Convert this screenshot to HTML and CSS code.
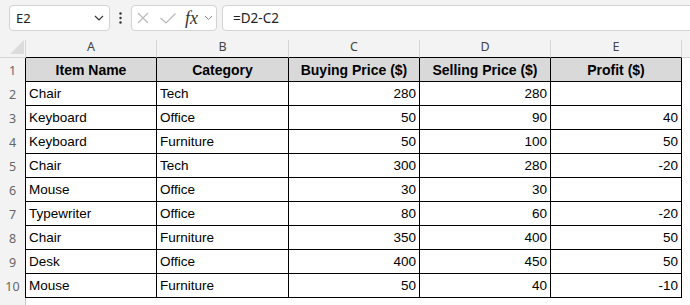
FILE: index.html
```html
<!DOCTYPE html>
<html lang="en">
<head>
    <meta charset="UTF-8">
    <meta name="viewport" content="width=device-width, initial-scale=1.0">
    <title>Profit Sheet</title>
    <link rel="stylesheet" href="styles.css">
</head>
<body>
    <div class="toolbar">
        <div class="name-box">
            <span>E2</span>
            <svg class="chevron" width="10" height="6" viewBox="0 0 10 6"><path d="M1 1 L5 5 L9 1" fill="none" stroke="#333" stroke-width="1.1"/></svg>
        </div>
        <div class="more">
            <svg width="3" height="12" viewBox="0 0 3 12"><circle cx="1.5" cy="1.5" r="1.2" fill="#333"/><circle cx="1.5" cy="6" r="1.2" fill="#333"/><circle cx="1.5" cy="10.5" r="1.2" fill="#333"/></svg>
        </div>
        <div class="fx-box">
            <svg class="cancel" width="12" height="12" viewBox="0 0 12 12"><path d="M1 1 L11 11 M11 1 L1 11" stroke="#b9b9b9" stroke-width="1.2"/></svg>
            <svg class="enter" width="16" height="11" viewBox="0 0 16 11"><path d="M0.5 5 L6 10 L15.5 0.5" fill="none" stroke="#b9b9b9" stroke-width="1.2"/></svg>
            <span class="fx">fx</span>
            <svg class="fx-chevron" width="9" height="6" viewBox="0 0 9 6"><path d="M1 1 L4.5 4.5 L8 1" fill="none" stroke="#888" stroke-width="1"/></svg>
        </div>
        <div class="formula">=D2-C2</div>
    </div>

    <div class="sheet">
        <div class="corner">
            <svg width="14" height="14" viewBox="0 0 14 14"><path d="M14 0 L14 14 L0 14 Z" fill="#dcdcdc"/></svg>
        </div>
        <div class="col-head">A</div>
        <div class="col-head">B</div>
        <div class="col-head">C</div>
        <div class="col-head">D</div>
        <div class="col-head">E</div>
        <div class="col-head last"></div>

        <div class="row-head">1</div>
        <div class="cell hdr">Item Name</div>
        <div class="cell hdr">Category</div>
        <div class="cell hdr">Buying Price ($)</div>
        <div class="cell hdr">Selling Price ($)</div>
        <div class="cell hdr">Profit ($)</div>
        <div class="blank"></div>

        <div class="row-head">2</div>
        <div class="cell">Chair</div>
        <div class="cell">Tech</div>
        <div class="cell num">280</div>
        <div class="cell num">280</div>
        <div class="cell num"></div>
        <div class="blank"></div>

        <div class="row-head">3</div>
        <div class="cell">Keyboard</div>
        <div class="cell">Office</div>
        <div class="cell num">50</div>
        <div class="cell num">90</div>
        <div class="cell num">40</div>
        <div class="blank"></div>

        <div class="row-head">4</div>
        <div class="cell">Keyboard</div>
        <div class="cell">Furniture</div>
        <div class="cell num">50</div>
        <div class="cell num">100</div>
        <div class="cell num">50</div>
        <div class="blank"></div>

        <div class="row-head">5</div>
        <div class="cell">Chair</div>
        <div class="cell">Tech</div>
        <div class="cell num">300</div>
        <div class="cell num">280</div>
        <div class="cell num">-20</div>
        <div class="blank"></div>

        <div class="row-head">6</div>
        <div class="cell">Mouse</div>
        <div class="cell">Office</div>
        <div class="cell num">30</div>
        <div class="cell num">30</div>
        <div class="cell num"></div>
        <div class="blank"></div>

        <div class="row-head">7</div>
        <div class="cell">Typewriter</div>
        <div class="cell">Office</div>
        <div class="cell num">80</div>
        <div class="cell num">60</div>
        <div class="cell num">-20</div>
        <div class="blank"></div>

        <div class="row-head">8</div>
        <div class="cell">Chair</div>
        <div class="cell">Furniture</div>
        <div class="cell num">350</div>
        <div class="cell num">400</div>
        <div class="cell num">50</div>
        <div class="blank"></div>

        <div class="row-head">9</div>
        <div class="cell">Desk</div>
        <div class="cell">Office</div>
        <div class="cell num">400</div>
        <div class="cell num">450</div>
        <div class="cell num">50</div>
        <div class="blank"></div>

        <div class="row-head">10</div>
        <div class="cell">Mouse</div>
        <div class="cell">Furniture</div>
        <div class="cell num">50</div>
        <div class="cell num">40</div>
        <div class="cell num">-10</div>
        <div class="blank"></div>

        <div class="row-head last"></div>
        <div class="blank"></div>
        <div class="blank"></div>
        <div class="blank"></div>
        <div class="blank"></div>
        <div class="blank"></div>
        <div class="blank"></div>
    </div>
</body>
</html>
```

FILE: styles.css
```css
/* Basic page */
body {
    margin: 0;
    font-family: "Liberation Sans", Arial, sans-serif;
    background-color: #fff;
    overflow: hidden;
}

* {
    box-sizing: border-box;
}

/* Formula toolbar */
.toolbar {
    display: flex;
    align-items: flex-start;
    height: 40px;
    padding: 5px 0 0 9px;
    background-color: #f3f3f3;
    font-family: "Noto Sans", sans-serif;
}

.name-box {
    width: 101px;
    height: 26px;
    border: 1px solid #d3d3d3;
    border-radius: 4px;
    background-color: #fff;
    display: flex;
    align-items: center;
    justify-content: space-between;
    padding: 0 5px 0 6px;
    font-size: 13px;
    color: #222;
}

.more {
    width: 21px;
    height: 26px;
    display: flex;
    align-items: center;
    justify-content: center;
}

.fx-box {
    width: 86px;
    height: 26px;
    border: 1px solid #d3d3d3;
    border-radius: 4px;
    background-color: #fff;
    display: flex;
    align-items: center;
    padding-left: 5px;
}

.fx-box .enter {
    margin-left: 11px;
}

.fx-box .fx {
    margin-left: 9px;
    width: 15px;
    font-family: "Liberation Serif", serif;
    font-style: italic;
    font-size: 18px;
    line-height: 20px;
    color: #333;
}

.fx-box .fx-chevron {
    margin-left: 4px;
}

.formula {
    flex: 1;
    height: 26px;
    margin-left: 5px;
    margin-right: -8px;
    border: 1px solid #d3d3d3;
    border-radius: 4px;
    background-color: #fff;
    padding-left: 10px;
    font-size: 13.5px;
    line-height: 24px;
    color: #222;
}

/* Sheet grid */
.sheet {
    display: grid;
    grid-template-columns: 26px 131px 132px 131px 131px 131px 1fr;
    grid-template-rows: 18px repeat(10, 24px) 1fr;
    height: 265px;
}

.corner {
    background-color: #f3f3f3;
    border-right: 1px solid #d5d5d5;
    border-bottom: 1px solid #d5d5d5;
    display: flex;
    align-items: flex-end;
    justify-content: flex-end;
    padding: 0 1px 3px 0;
}

.col-head {
    background-color: #f3f3f3;
    border-right: 1px solid #d5d5d5;
    border-bottom: 1px solid #000;
    text-align: center;
    font-family: "Noto Sans", sans-serif;
    font-size: 12.5px;
    line-height: 14px;
    color: #444;
}

.col-head.last {
    border-right: none;
    border-bottom-color: #d5d5d5;
}

.row-head {
    background-color: #f3f3f3;
    border-right: 1px solid #000;
    text-align: center;
    font-family: "Noto Sans", sans-serif;
    font-size: 12.5px;
    line-height: 26px;
    color: #666;
}

.row-head.last {
    border-right-color: #c8c8c8;
}

/* Table cells */
.cell {
    border-right: 1px solid #000;
    border-bottom: 1px solid #000;
    padding: 1px 3px 0 3px;
    font-size: 13.5px;
    line-height: 22px;
    color: #000;
    white-space: nowrap;
    overflow: hidden;
}

.cell.num {
    text-align: right;
}

.cell.hdr {
    background-color: #d9d9d9;
    font-weight: bold;
    font-size: 14px;
    text-align: center;
}

.blank {
    background-color: #fff;
}
```
